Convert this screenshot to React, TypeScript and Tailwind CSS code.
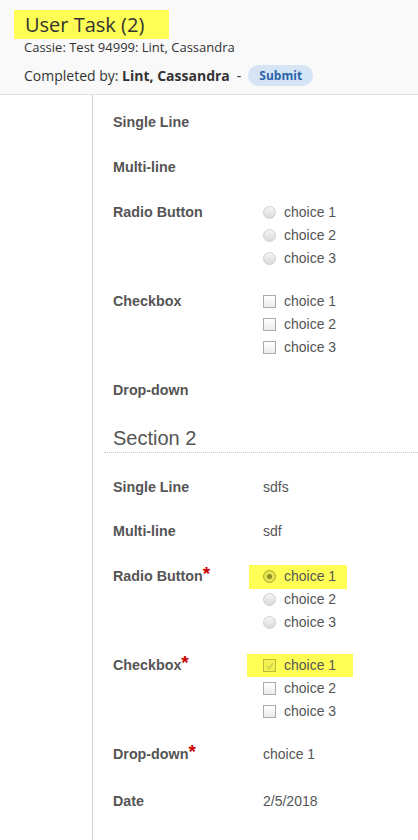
import React from "react";

type Field = {
  label: string;
  required?: boolean;
  kind: "text" | "radio" | "checkbox";
  value?: string;
  checked?: number;
  mb: string;
};

const section1: Field[] = [
  { label: "Single Line", kind: "text", mb: "mb-[22px]" },
  { label: "Multi-line", kind: "text", mb: "mb-[22px]" },
  { label: "Radio Button", kind: "radio", mb: "mb-[20px]" },
  { label: "Checkbox", kind: "checkbox", mb: "mb-[20px]" },
  { label: "Drop-down", kind: "text", mb: "mb-0" },
];

const section2: Field[] = [
  { label: "Single Line", kind: "text", value: "sdfs", mb: "mb-[21px]" },
  { label: "Multi-line", kind: "text", value: "sdf", mb: "mb-[22px]" },
  { label: "Radio Button", required: true, kind: "radio", checked: 0, mb: "mb-[20px]" },
  { label: "Checkbox", required: true, kind: "checkbox", checked: 0, mb: "mb-[20px]" },
  { label: "Drop-down", required: true, kind: "text", value: "choice 1", mb: "mb-[24px]" },
  { label: "Date", kind: "text", value: "2/5/2018", mb: "mb-0" },
];

const choices = ["choice 1", "choice 2", "choice 3"];

function Radio({ on }: { on?: boolean }) {
  if (on) {
    return (
      <span className="w-[13px] h-[13px] rounded-full border border-[#a8a82c] bg-[#e4e450] flex items-center justify-center">
        <span className="w-[5px] h-[5px] rounded-full bg-[#8e8e28]" />
      </span>
    );
  }
  return <span className="w-[13px] h-[13px] rounded-full border border-[#cfcfcf] bg-linear-to-b from-[#f6f6f6] to-[#dadada]" />;
}

function Check({ on }: { on?: boolean }) {
  if (on) {
    return (
      <span className="w-[13px] h-[13px] border border-[#bcbc3c] bg-[#f2f250] flex items-center justify-center">
        <svg viewBox="0 0 12 12" className="w-[10px] h-[10px]">
          <path d="M2.5 6.5 L5 9 L9.5 2.5" fill="none" stroke="#c4c44a" strokeWidth="1.4" />
        </svg>
      </span>
    );
  }
  return <span className="w-[13px] h-[13px] border border-[#ababab] bg-linear-to-b from-white to-[#ebebeb]" />;
}

function Row({ f }: { f: Field }) {
  return (
    <div className={`flex ${f.mb}`}>
      <div className="w-[150px] shrink-0 h-[23px] flex items-center text-[14.3px] font-bold text-[#555]">
        <span>{f.label}</span>
        {f.required && <span className="text-[#c00] text-[19px] font-bold self-start leading-[17px]">*</span>}
      </div>
      <div className="flex flex-col text-[14px] text-[#555]">
        {f.kind === "text" && <div className="h-[23px] flex items-center">{f.value}</div>}
        {f.kind !== "text" &&
          choices.map((c, i) => {
            const on = f.checked === i;
            return (
              <div key={c} className="h-[23px] flex items-center">
                <span
                  className={`flex items-center gap-[8px] ${
                    on
                      ? f.kind === "radio"
                        ? "bg-[#ffff55] -ml-[14px] pl-[14px] pr-[11px] h-[24px]"
                        : "bg-[#ffff55] -ml-[16px] pl-[16px] pr-[17px] h-[23px]"
                      : ""
                  }`}
                >
                  {f.kind === "radio" ? <Radio on={on} /> : <Check on={on} />}
                  <span>{c}</span>
                </span>
              </div>
            );
          })}
      </div>
    </div>
  );
}

export default function App() {
  return (
    <div className="w-[418px] h-[840px] bg-white overflow-hidden">
      {/* Header */}
      <div className="h-[95px] bg-[#f9f9f9] border-b border-[#e2e2e2] pt-[10px] pl-[24px] text-[#333] font-['Open_Sans',sans-serif]">
        <div className="inline-flex items-center h-[29px] bg-[#ffff55] -ml-[10px] pl-[11px] pr-[25px] text-[20px]">
          User Task (2)
        </div>
        <div className="text-[13px] leading-[16px]">Cassie: Test 94999: Lint, Cassandra</div>
        <div className="mt-[10px] flex items-center h-[21px] text-[14px]">
          <span>Completed by:&nbsp;</span>
          <span className="font-bold">Lint, Cassandra</span>
          <span className="ml-[7px]">-</span>
          <span className="ml-[7px] h-[21px] px-[11px] rounded-full bg-[#d5e5f6] text-[#2b62a8] text-[12px] font-bold flex items-center">
            Submit
          </span>
        </div>
      </div>

      {/* Body */}
      <div className="flex h-full font-['Liberation_Sans',Arial,sans-serif]">
        <div className="w-[93px] shrink-0 border-r border-[#cfcfcf]" />
        <div className="flex-1 pt-[16px]">
          <div className="pl-[20px]">
            {section1.map((f) => (
              <Row key={"a" + f.label} f={f} />
            ))}
          </div>

          <div className="ml-[11px] mt-[22px] pl-[9px] h-[29px] border-b border-dotted border-[#c8c8c8] text-[20px] leading-[28px] text-[#555]">
            Section 2
          </div>

          <div className="pl-[20px] pt-[23px]">
            {section2.map((f) => (
              <Row key={"b" + f.label} f={f} />
            ))}
          </div>
        </div>
      </div>
    </div>
  );
}
